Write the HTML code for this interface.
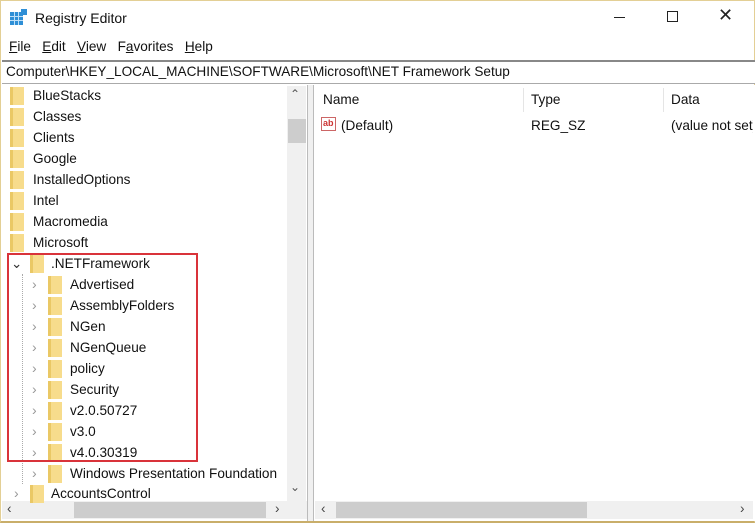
<!DOCTYPE html>
<html><head><style>
*{margin:0;padding:0;box-sizing:border-box}
body{width:755px;height:523px;overflow:hidden;background:#fff;font-family:"Liberation Sans",sans-serif;font-size:13.6px;color:#111;position:relative}
.a{position:absolute;white-space:nowrap}
.f{position:absolute;width:14px;height:18px;background:#f7dc8c;border-left:3px solid #eac865}
.t{position:absolute;font-size:13.6px;line-height:16px}
</style></head><body>
<div class="a" style="left:0;top:0;width:755px;height:523px;border:1px solid #e3cf95;border-bottom:2px solid #c9ae6a"></div>
<svg class="a" style="left:10px;top:9px" width="17" height="17"><rect x="0" y="3" width="13" height="13" fill="#2f8fd6"/><g stroke="#bfe0f8" stroke-width="1"><line x1="4.5" y1="3" x2="4.5" y2="16"/><line x1="8.5" y1="3" x2="8.5" y2="16"/><line x1="0" y1="7.5" x2="13" y2="7.5"/><line x1="0" y1="11.5" x2="13" y2="11.5"/></g><rect x="11" y="0" width="6" height="6" fill="#2f8fd6"/></svg>
<div class="a" style="left:35px;top:10px;font-size:14px">Registry Editor</div>
<div class="a" style="left:614px;top:17px;width:11px;height:1px;background:#222"></div>
<div class="a" style="left:667px;top:11px;width:11px;height:11px;border:1px solid #222"></div>
<div class="a" style="left:718px;top:5px;font-size:18px;color:#222">✕</div>
<div class="a" style="left:9px;top:39px"><u>F</u>ile&nbsp;&nbsp; <u>E</u>dit&nbsp;&nbsp; <u>V</u>iew&nbsp;&nbsp; F<u>a</u>vorites&nbsp;&nbsp; <u>H</u>elp</div>
<div class="a" style="left:2px;top:60px;width:753px;height:24px;border-top:2px solid #888;border-bottom:1px solid #aaa;background:#fff"></div>
<div class="a" style="left:6px;top:64px">Computer\HKEY_LOCAL_MACHINE\SOFTWARE\Microsoft\NET Framework Setup</div>
<div class="a" style="left:307px;top:85px;width:7px;height:436px;background:#f0f0f0;border-left:1px solid #bbb;border-right:1px solid #bbb"></div>
<div class="a" style="left:287px;top:86px;width:19px;height:415px;background:#f0f0f0"></div>
<div class="a" style="left:290px;top:87px;color:#555;font-size:12px">&#8963;</div>
<div class="a" style="left:288px;top:119px;width:18px;height:24px;background:#cdcdcd"></div>
<div class="a" style="left:290px;top:480px;color:#555;font-size:12px">&#8964;</div>
<div class="a" style="left:2px;top:501px;width:305px;height:18px;background:#f0f0f0"></div>
<div class="a" style="left:74px;top:502px;width:192px;height:16px;background:#cdcdcd"></div>
<div class="a" style="left:7px;top:501px;color:#444">&lsaquo;</div>
<div class="a" style="left:275px;top:501px;color:#444">&rsaquo;</div>
<div class="a" style="left:315px;top:501px;width:438px;height:18px;background:#f0f0f0"></div>
<div class="a" style="left:336px;top:502px;width:251px;height:16px;background:#cdcdcd"></div>
<div class="a" style="left:321px;top:501px;color:#444">&lsaquo;</div>
<div class="a" style="left:740px;top:501px;color:#444">&rsaquo;</div>
<div class="a" style="left:323px;top:92px">Name</div>
<div class="a" style="left:523px;top:88px;width:1px;height:24px;background:#e5e5e5"></div>
<div class="a" style="left:531px;top:92px">Type</div>
<div class="a" style="left:663px;top:88px;width:1px;height:24px;background:#e5e5e5"></div>
<div class="a" style="left:671px;top:92px">Data</div>
<div class="a" style="left:321px;top:117px;width:15px;height:14px;border:1px solid #c66;font-size:9px;color:#c33;line-height:11px;padding-left:1px;font-weight:bold">ab</div>
<div class="a" style="left:341px;top:118px">(Default)</div>
<div class="a" style="left:531px;top:118px">REG_SZ</div>
<div class="a" style="left:671px;top:118px">(value not set)</div>
<div class="a" style="left:753px;top:85px;width:2px;height:436px;background:#fff"></div>
<div id="tree"></div>
<div class="a" style="left:22px;top:274px;height:210px;border-left:1px dotted #aaa"></div>
<div class="a" style="left:7px;top:253px;width:191px;height:209px;border:2px solid #d9333a"></div>
<script>
var tops=["BlueStacks","Classes","Clients","Google","InstalledOptions","Intel","Macromedia","Microsoft"];
var kids=["Advertised","AssemblyFolders","NGen","NGenQueue","policy","Security","v2.0.50727","v3.0","v4.0.30319","Windows Presentation Foundation"];
var h="";
function row(y,fx,tx,txt,ch){
 h+='<div class="f" style="left:'+fx+'px;top:'+(y-9)+'px"></div><div class="t a" style="left:'+tx+'px;top:'+(y-8)+'px">'+txt+'</div>';
 if(ch)h+=ch;
}
tops.forEach(function(n,i){row(96+21*i,10,33,n)});
row(264,30,51,".NETFramework",'<div class="a" style="left:11px;top:256px;color:#333">&#8964;</div>');
kids.forEach(function(n,i){var y=285+21*i;row(y,48,70,n,'<div class="a" style="left:32px;top:'+(y-9)+'px;color:#999;font-size:14px">&rsaquo;</div>')});
row(494,30,51,"AccountsControl",'<div class="a" style="left:14px;top:485px;color:#999;font-size:14px">&rsaquo;</div>');
document.getElementById("tree").innerHTML=h;
</script>
</body></html>
